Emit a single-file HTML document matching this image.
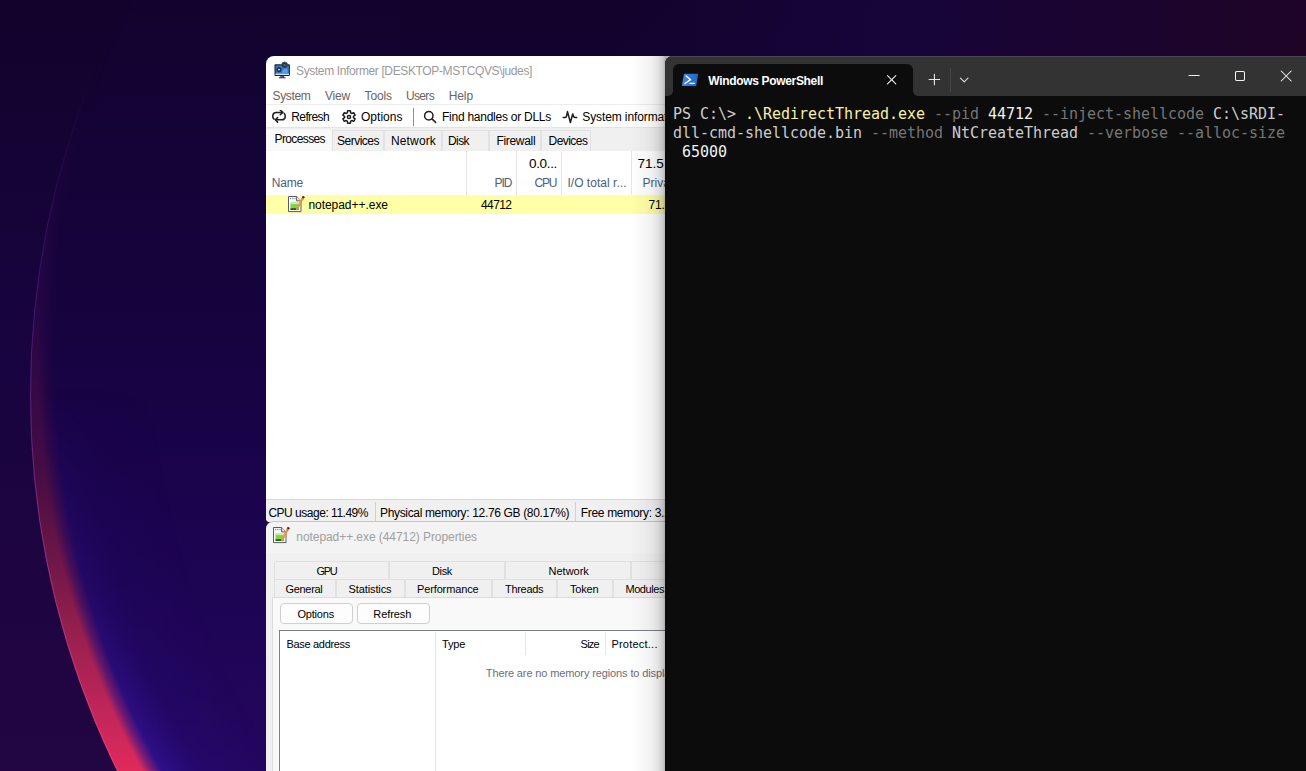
<!DOCTYPE html>
<html>
<head>
<meta charset="utf-8">
<title>Desktop</title>
<style>
*{box-sizing:border-box;margin:0;padding:0}
html,body{width:1306px;height:771px;overflow:hidden;background:#150536}
body{position:relative;font-family:"Liberation Sans",sans-serif;font-size:12px;color:#000}
#wall{position:absolute;left:0;top:0;width:1306px;height:771px}
.t{position:absolute;white-space:nowrap;line-height:1;display:block}
.a{position:absolute}
#si{position:absolute;left:266px;top:56px;width:420px;height:466px;background:#fff;border-radius:8px 8px 0 4px;overflow:hidden}
#si .msep{left:0;top:48px;width:100%;height:1px;background:#ededed}
#si .tbsep{left:147px;top:52px;width:1px;height:18px;background:#8e8e8e}
#si .tabs{left:0;top:71px;width:100%;height:24px;background:#f0f0f0;border-top:1px solid #e4e4e4}
#si .tab{top:74px;height:21px;border:1px solid #e2e2e2;border-bottom:none;background:#f0f0f0}
#si .tab.sel{top:73px;height:22px;background:#f9f9f9;border-color:#f4f4f4;left:0}
#si .colsep{top:95px;width:1px;height:44px;background:#e5e5e5}
#si .row{left:0;top:139px;width:100%;height:19px;background:#ffffa6}
#si .status{left:0;top:443px;width:100%;height:23px;background:#f0f0f0;border-top:1px solid #d7d7d7}
#si .ssep{top:446px;width:1px;height:19px;background:#d0d0d0}
#pr{position:absolute;left:266px;top:521px;width:420px;height:260px;background:#f0f0f0;border-radius:8px 0 0 0;overflow:hidden;border-top:1px solid #c6c6c6}
#pr .tb{left:0;top:0;width:100%;height:31px;background:#f3f3f3}
#pr .ptab{height:18px;border:1px solid #e0e0e0;border-bottom:none;background:#f0f0f0}
#pr .page{left:6px;top:75px;width:430px;height:200px;background:#f9f9f9;border:1px solid #dcdcdc}
#pr .btn{height:21px;top:81px;background:#fdfdfd;border:1px solid #d0d0d0;border-radius:4px}
#pr .lv{left:13px;top:108px;width:420px;height:200px;background:#fff;border:1px solid #7a7f88}
#pr .hsep{top:110px;width:1px;height:23px;background:#e5e5e5}
#shadow{position:absolute;left:630px;top:56px;width:45px;height:715px;background:linear-gradient(to right,rgba(0,0,0,0) 0%,rgba(0,0,0,.03) 33%,rgba(0,0,0,.06) 49%,rgba(0,0,0,.11) 62%,rgba(0,0,0,.20) 73%,rgba(0,0,0,.30) 78%,rgba(0,0,0,.35) 100%)}
#tm{position:absolute;left:665px;top:56px;width:660px;height:730px;background:#0c0c0c;border-radius:8px 0 0 0;overflow:hidden}
#tm .strip{left:0;top:0;width:100%;height:40px;background:#333333;border-top:1px solid #4a4a52}
#tm .tabb{left:8px;top:8px;width:240px;height:32px;background:#0c0c0c;border-radius:6px 6px 0 0}
#tm .tsep{left:285px;top:12px;width:1px;height:24px;background:#464646}
#tm pre{position:absolute;left:8px;top:49px;font-family:"DejaVu Sans Mono","Liberation Mono",monospace;font-size:15px;line-height:19px;letter-spacing:-0.031px;color:#cccccc}
#tm .fl{top:35px;width:5px;height:5px}
</style>
</head>
<body>
<svg id="wall" viewBox="0 0 1306 771">
<defs>
<linearGradient id="bg" x1="0" y1="0" x2="0" y2="771" gradientUnits="userSpaceOnUse"><stop offset="0" stop-color="#11032b"/><stop offset="0.45" stop-color="#180440"/><stop offset="1" stop-color="#220542"/></linearGradient>
<linearGradient id="topr" x1="600" y1="0" x2="1306" y2="0" gradientUnits="userSpaceOnUse"><stop offset="0" stop-color="#16043a" stop-opacity="0"/><stop offset="0.4" stop-color="#17043a" stop-opacity=".9"/><stop offset="1" stop-color="#1f0426"/></linearGradient>
<linearGradient id="inner" x1="0" y1="0" x2="0" y2="771" gradientUnits="userSpaceOnUse"><stop offset="0" stop-color="#12032e"/><stop offset="0.4" stop-color="#16033e"/><stop offset="0.7" stop-color="#1c0450"/><stop offset="1" stop-color="#23065e"/></linearGradient>
<radialGradient id="glow" cx="893" cy="362" r="855" gradientUnits="userSpaceOnUse">
<stop offset="0.86" stop-color="#2a0c88" stop-opacity="0"/><stop offset="0.94" stop-color="#2a0c88" stop-opacity=".3"/><stop offset="0.98" stop-color="#34149a" stop-opacity=".75"/><stop offset="1" stop-color="#4a1c90" stop-opacity=".9"/></radialGradient>
<linearGradient id="glowfade" x1="0" y1="0" x2="0" y2="771" gradientUnits="userSpaceOnUse"><stop offset="0.5" stop-color="#fff" stop-opacity="0"/><stop offset="0.78" stop-color="#fff" stop-opacity=".4"/><stop offset="1" stop-color="#fff" stop-opacity="1"/></linearGradient>
<mask id="gm"><rect width="1306" height="771" fill="url(#glowfade)"/></mask>
<linearGradient id="rim" x1="0" y1="0" x2="0" y2="771" gradientUnits="userSpaceOnUse">
<stop offset="0.1" stop-color="#3a0a60" stop-opacity="0"/><stop offset="0.4" stop-color="#400a50" stop-opacity=".35"/><stop offset="0.62" stop-color="#581044" stop-opacity=".75"/><stop offset="0.8" stop-color="#8e1e4c"/><stop offset="0.93" stop-color="#c4265a"/><stop offset="1" stop-color="#e02a5a"/></linearGradient>
<linearGradient id="edge" x1="0" y1="0" x2="0" y2="771" gradientUnits="userSpaceOnUse">
<stop offset="0.1" stop-color="#6a30c0" stop-opacity="0"/><stop offset="0.35" stop-color="#6a30b8" stop-opacity=".32"/><stop offset="0.7" stop-color="#9038a0" stop-opacity=".7"/><stop offset="1" stop-color="#f04070" stop-opacity=".9"/></linearGradient>
<radialGradient id="soft" cx="893" cy="362" r="855" gradientUnits="userSpaceOnUse"><stop offset="0.980" stop-color="#fff" stop-opacity="1"/><stop offset="0.991" stop-color="#fff" stop-opacity=".55"/><stop offset="1" stop-color="#fff" stop-opacity="0"/></radialGradient>
<mask id="sm"><rect width="400" height="771" fill="url(#soft)"/></mask>
<clipPath id="oc"><circle cx="885" cy="395" r="855"/></clipPath>
<filter id="b3" x="-5%" y="-5%" width="110%" height="110%"><feGaussianBlur stdDeviation="2.5"/></filter>
</defs>
<rect width="1306" height="771" fill="url(#bg)"/>
<circle cx="885" cy="395" r="855" fill="url(#rim)"/>
<g clip-path="url(#oc)"><g mask="url(#sm)"><rect width="400" height="771" fill="url(#inner)"/>
<g mask="url(#gm)"><rect width="400" height="771" fill="url(#glow)"/></g></g>
</g>
<circle cx="885" cy="395" r="854.5" fill="none" stroke="url(#edge)" stroke-width="1"/>
<rect x="600" y="0" width="706" height="60" fill="url(#topr)"/>
</svg>
<div id="si">
<div class="a msep"></div>
<div class="a tbsep"></div>
<div class="a tabs"></div>
<div class="a tab sel" style="width:66px"></div>
<div class="a tab" style="left:66px;width:52px"></div>
<div class="a tab" style="left:118px;width:58px"></div>
<div class="a tab" style="left:176px;width:47px"></div>
<div class="a tab" style="left:223px;width:52px"></div>
<div class="a tab" style="left:275px;width:50px;border-right:1px solid #e2e2e2"></div>
<div class="a colsep" style="left:200px"></div>
<div class="a colsep" style="left:250px"></div>
<div class="a colsep" style="left:295px"></div>
<div class="a colsep" style="left:365px"></div>
<div class="a row"></div>
<div class="a status"></div>
<div class="a ssep" style="left:109px"></div>
<div class="a ssep" style="left:309px"></div>
<svg class="a" style="left:8px;top:5px" width="17" height="18" viewBox="0 0 17 18">
<rect x="0.5" y="3.3" width="15.4" height="11.6" rx="0.8" fill="#1c1f26"/>
<rect x="1.6" y="4.4" width="13.2" height="7.6" fill="#2f7fd6"/>
<rect x="1.4" y="12.4" width="13.6" height="1.6" fill="#cfdfee"/>
<circle cx="5" cy="8.6" r="2.6" fill="#2a3038"/><circle cx="5" cy="8.6" r="0.9" fill="#e8eef4"/>
<circle cx="10.6" cy="4" r="3" fill="#2a3442" stroke="#4a5868" stroke-width="0.8"/><circle cx="10.6" cy="4" r="1" fill="#3d78b8"/>
<path d="M9.2,11.8 V9 M11,11.8 V7.6 M12.8,11.8 V8.4" stroke="#7db6f0" stroke-width="1"/>
<rect x="6.2" y="14.9" width="4" height="1.6" fill="#4a5560"/>
<rect x="4.8" y="16.3" width="6.8" height="1" fill="#2a2e34"/>
</svg>
<svg class="a" style="left:5.9px;top:54.2px" width="15" height="13" viewBox="0 0 15 13" fill="none" stroke="#1f1f1f" stroke-width="1.55" stroke-linecap="round" stroke-linejoin="round">
<path d="M2.1,9.1 C0,7.3 0.2,2.4 4.4,2.4 H10.4"/><path d="M8.3,0.1 L10.8,2.4 L8.3,4.8"/>
<path d="M12.3,3.4 C13.9,5.2 13.7,9.7 10,9.7 H4"/><path d="M5.6,7.6 L3.4,9.8 L5.6,12.1"/>
</svg>
<svg class="a" style="left:76px;top:54px" width="14" height="14" viewBox="0 0 14 14" fill="none" stroke="#1f1f1f" stroke-width="1.5" stroke-linejoin="round">
<path d="M5.34,2.82 L5.60,0.75 L8.40,0.75 L8.66,2.82 L9.80,3.47 L11.71,2.67 L13.11,5.09 L11.45,6.34 L11.45,7.66 L13.11,8.91 L11.71,11.33 L9.80,10.53 L8.66,11.18 L8.40,13.25 L5.60,13.25 L5.34,11.18 L4.20,10.53 L2.29,11.33 L0.89,8.91 L2.55,7.66 L2.55,6.34 L0.89,5.09 L2.29,2.67 L4.20,3.47Z"/><circle cx="7" cy="7" r="1.6"/>
</svg>
<svg class="a" style="left:157px;top:54px" width="14" height="14" viewBox="0 0 14 14" fill="none" stroke="#1f1f1f" stroke-width="1.5" stroke-linecap="round">
<circle cx="5.8" cy="5.7" r="4.2"/><path d="M9,8.9 L12.6,12.4"/>
</svg>
<svg class="a" style="left:296px;top:54px" width="16" height="14" viewBox="0 0 16 14" fill="none" stroke="#1f1f1f" stroke-width="1.5" stroke-linecap="round" stroke-linejoin="round">
<path d="M1.2,7.5 H3 Q4.3,7.5 4.6,6 L5.5,1.6 L8.4,12.5 L10.7,4 Q11.4,7.5 13,7.5 H14.8"/>
</svg>
<svg class="a" style="left:22px;top:139.6px" width="18" height="17" viewBox="0 0 18 17">
<path d="M0.5,0.5 H8.6 L13,4.9 V15.6 H0.5 Z" fill="#fdfdfd" stroke="#565a6c" stroke-width="1"/>
<path d="M8.6,0.5 V4.9 H13" fill="#e8e8ee" stroke="#565a6c" stroke-width="1"/>
<path d="M2,2.5 H8" stroke="#8a8e9e" stroke-width="1.4" stroke-dasharray="1.2 1"/>
<rect x="2.5" y="6.5" width="8" height="7.3" fill="#7ed63a"/>
<rect x="2.5" y="6.5" width="8" height="1.6" fill="#cfe8c0"/>
<rect x="2.5" y="12.3" width="8" height="1.6" fill="#1f4a12"/>
<path d="M15.3,1.2 L9,13" stroke="#e8963a" stroke-width="2.2" stroke-linecap="round"/>
<path d="M15.8,0.4 L14.9,2" stroke="#7a0a10" stroke-width="2.4"/>
<path d="M14.9,2 L14.2,3.3" stroke="#8a93a8" stroke-width="2.2"/>
</svg>
<span class="t" style="left:30.0px;top:9.00px;font-size:12px;color:#9a9a9a;letter-spacing:-0.372px;">System Informer [DESKTOP-MSTCQVS\judes]</span>
<span class="t" style="left:6.5px;top:34.00px;font-size:12px;color:#666666;letter-spacing:-0.336px;">System</span>
<span class="t" style="left:59.0px;top:34.00px;font-size:12px;color:#666666;letter-spacing:-0.199px;">View</span>
<span class="t" style="left:98.5px;top:34.00px;font-size:12px;color:#666666;letter-spacing:-0.103px;">Tools</span>
<span class="t" style="left:140.0px;top:34.00px;font-size:12px;color:#666666;letter-spacing:-0.669px;">Users</span>
<span class="t" style="left:182.7px;top:34.00px;font-size:12px;color:#666666;letter-spacing:-0.097px;">Help</span>
<span class="t" style="left:25.3px;top:55.00px;font-size:12px;color:#000;letter-spacing:-0.619px;">Refresh</span>
<span class="t" style="left:95.0px;top:55.00px;font-size:12px;color:#000;letter-spacing:0.020px;">Options</span>
<span class="t" style="left:176.0px;top:55.00px;font-size:12px;color:#000;letter-spacing:-0.254px;">Find handles or DLLs</span>
<span class="t" style="left:316.3px;top:55.00px;font-size:12px;color:#000;letter-spacing:-0.111px;">System information</span>
<span class="t" style="left:8.5px;top:77.00px;font-size:12px;color:#000;letter-spacing:-0.615px;">Processes</span>
<span class="t" style="left:71.0px;top:79.00px;font-size:12px;color:#000;letter-spacing:-0.502px;">Services</span>
<span class="t" style="left:125.0px;top:79.00px;font-size:12px;color:#000;letter-spacing:0.141px;">Network</span>
<span class="t" style="left:182.0px;top:79.00px;font-size:12px;color:#000;letter-spacing:-0.586px;">Disk</span>
<span class="t" style="left:230.4px;top:79.00px;font-size:12px;color:#000;letter-spacing:-0.305px;">Firewall</span>
<span class="t" style="left:282.5px;top:79.00px;font-size:12px;color:#000;letter-spacing:-0.541px;">Devices</span>
<span class="t" style="left:263.0px;top:101.00px;font-size:13.5px;color:#000;letter-spacing:-0.339px;">0.0...</span>
<span class="t" style="left:371.5px;top:101.00px;font-size:13.5px;color:#000;letter-spacing:0.005px;">71.5</span>
<span class="t" style="left:5.7px;top:121.00px;font-size:12px;color:#4c607a;letter-spacing:-0.179px;">Name</span>
<span class="t" style="left:228.5px;top:121.00px;font-size:12px;color:#4c607a;letter-spacing:-1.039px;">PID</span>
<span class="t" style="left:268.5px;top:121.00px;font-size:12px;color:#4c607a;letter-spacing:-1.148px;">CPU</span>
<span class="t" style="left:301.4px;top:121.00px;font-size:12px;color:#4c607a;letter-spacing:0.037px;">I/O total r...</span>
<span class="t" style="left:376.6px;top:121.00px;font-size:12px;color:#4c607a;letter-spacing:0.007px;">Private</span>
<span class="t" style="left:42.4px;top:143.00px;font-size:12px;color:#000;letter-spacing:-0.037px;">notepad++.exe</span>
<span class="t" style="left:215.1px;top:143.00px;font-size:12px;color:#000;letter-spacing:-0.655px;">44712</span>
<span class="t" style="left:382.5px;top:143.00px;font-size:12px;color:#000;letter-spacing:-0.229px;">71.5</span>
<span class="t" style="left:2.4px;top:451.00px;font-size:12px;color:#000;letter-spacing:-0.485px;">CPU usage: 11.49%</span>
<span class="t" style="left:114.0px;top:451.00px;font-size:12px;color:#000;letter-spacing:-0.340px;">Physical memory: 12.76 GB (80.17%)</span>
<span class="t" style="left:314.7px;top:451.00px;font-size:12px;color:#000;letter-spacing:-0.309px;">Free memory: 3.15 GB</span>
</div>
<div id="pr">
<div class="a tb"></div>
<div class="a page"></div>
<div class="a ptab" style="left:8px;top:39px;width:115px"></div>
<div class="a ptab" style="left:123px;top:39px;width:116px"></div>
<div class="a ptab" style="left:239px;top:39px;width:126px"></div>
<div class="a ptab" style="left:365px;top:39px;width:100px"></div>
<div class="a ptab" style="left:8px;top:57px;width:62px"></div>
<div class="a ptab" style="left:70px;top:57px;width:69px"></div>
<div class="a ptab" style="left:139px;top:57px;width:87px"></div>
<div class="a ptab" style="left:226px;top:57px;width:65px"></div>
<div class="a ptab" style="left:291px;top:57px;width:56px"></div>
<div class="a ptab" style="left:347px;top:57px;width:70px"></div>
<div class="a btn" style="left:14px;width:73px"></div>
<div class="a btn" style="left:91px;width:73px"></div>
<div class="a lv"></div>
<div class="a hsep" style="left:169px;height:200px"></div>
<div class="a hsep" style="left:259px"></div>
<div class="a hsep" style="left:339px"></div>
<svg class="a" style="left:7px;top:4.6px" width="18" height="17" viewBox="0 0 18 17">
<path d="M0.5,0.5 H8.6 L13,4.9 V15.6 H0.5 Z" fill="#fdfdfd" stroke="#565a6c" stroke-width="1"/>
<path d="M8.6,0.5 V4.9 H13" fill="#e8e8ee" stroke="#565a6c" stroke-width="1"/>
<path d="M2,2.5 H8" stroke="#8a8e9e" stroke-width="1.4" stroke-dasharray="1.2 1"/>
<rect x="2.5" y="6.5" width="8" height="7.3" fill="#7ed63a"/>
<rect x="2.5" y="6.5" width="8" height="1.6" fill="#cfe8c0"/>
<rect x="2.5" y="12.3" width="8" height="1.6" fill="#1f4a12"/>
<path d="M15.3,1.2 L9,13" stroke="#e8963a" stroke-width="2.2" stroke-linecap="round"/>
<path d="M15.8,0.4 L14.9,2" stroke="#7a0a10" stroke-width="2.4"/>
<path d="M14.9,2 L14.2,3.3" stroke="#8a93a8" stroke-width="2.2"/>
</svg>
<span class="t" style="left:30.3px;top:9.00px;font-size:12px;color:#a0a0a0;letter-spacing:-0.066px;">notepad++.exe (44712) Properties</span>
<span class="t" style="left:50.5px;top:44.00px;font-size:11px;color:#000;letter-spacing:-1.281px;">GPU</span>
<span class="t" style="left:166.0px;top:44.00px;font-size:11px;color:#000;letter-spacing:-0.348px;">Disk</span>
<span class="t" style="left:282.6px;top:44.00px;font-size:11px;color:#000;letter-spacing:-0.021px;">Network</span>
<span class="t" style="left:19.5px;top:62.00px;font-size:11px;color:#000;letter-spacing:-0.306px;">General</span>
<span class="t" style="left:82.5px;top:62.00px;font-size:11px;color:#000;letter-spacing:-0.102px;">Statistics</span>
<span class="t" style="left:151.0px;top:62.00px;font-size:11px;color:#000;letter-spacing:-0.135px;">Performance</span>
<span class="t" style="left:239.1px;top:62.00px;font-size:11px;color:#000;letter-spacing:-0.323px;">Threads</span>
<span class="t" style="left:304.0px;top:62.00px;font-size:11px;color:#000;letter-spacing:-0.192px;">Token</span>
<span class="t" style="left:359.4px;top:62.00px;font-size:11px;color:#000;letter-spacing:-0.425px;">Modules</span>
<span class="t" style="left:31.5px;top:87.00px;font-size:11px;color:#000;letter-spacing:-0.203px;">Options</span>
<span class="t" style="left:107.3px;top:87.00px;font-size:11px;color:#000;letter-spacing:-0.090px;">Refresh</span>
<span class="t" style="left:20.5px;top:117.00px;font-size:11px;color:#000;letter-spacing:-0.314px;">Base address</span>
<span class="t" style="left:176.0px;top:117.00px;font-size:11px;color:#000;letter-spacing:-0.140px;">Type</span>
<span class="t" style="left:314.6px;top:117.00px;font-size:11px;color:#000;letter-spacing:-0.752px;">Size</span>
<span class="t" style="left:345.4px;top:117.00px;font-size:11px;color:#000;letter-spacing:0.227px;">Protect...</span>
<span class="t" style="left:219.8px;top:146.00px;font-size:11px;color:#6d6d78;letter-spacing:-0.120px;">There are no memory regions to display.</span>
</div>
<div id="shadow"></div>
<div id="tm">
<div class="a strip"></div>
<div class="a tabb"></div>
<div class="a tsep"></div>
<div class="a fl" style="left:3px;background:radial-gradient(circle at 0 0,#333 4.4px,#0c0c0c 5.2px)"></div>
<div class="a fl" style="left:248px;background:radial-gradient(circle at 100% 0,#333 4.4px,#0c0c0c 5.2px)"></div>
<svg class="a" style="left:16px;top:17px" width="18" height="14" viewBox="0 0 18 14">
<defs><linearGradient id="psg" x1="0" y1="0" x2="1" y2="0"><stop offset="0" stop-color="#3d86e4"/><stop offset="1" stop-color="#2466c6"/></linearGradient></defs>
<path d="M3,0.8 H17.2 L15.2,13 H0.8 Z" fill="url(#psg)"/>
<path d="M5.2,3 L9.5,6.7 L4,10.5" fill="none" stroke="#fff" stroke-width="1.5" stroke-linecap="round" stroke-linejoin="round"/>
<path d="M9,10.4 H13.4" stroke="#fff" stroke-width="1.4" stroke-linecap="round"/>
</svg>
<svg class="a" style="left:221px;top:18px" width="12" height="12" viewBox="0 0 12 12" stroke="#f0f0f0" stroke-width="1.1" stroke-linecap="round"><path d="M1.5,1.6 L9.8,9.9 M9.8,1.6 L1.5,9.9"/></svg>
<svg class="a" style="left:263px;top:17px" width="13" height="13" viewBox="0 0 13 13" stroke="#e8e8e8" stroke-width="1.1" stroke-linecap="round"><path d="M6.4,1.2 V11.8 M1.1,6.5 H11.7"/></svg>
<svg class="a" style="left:294px;top:20px" width="11" height="8" viewBox="0 0 11 8" fill="none" stroke="#e0e0e0" stroke-width="1.1" stroke-linecap="round" stroke-linejoin="round"><path d="M1.4,2.2 L5.2,5.8 L9,2.2"/></svg>
<svg class="a" style="left:522px;top:13px" width="110" height="14" viewBox="0 0 110 14" fill="none" stroke="#f4f4f4" stroke-width="1.05" stroke-linecap="round"><path d="M2,6.5 H12.2"/><rect x="48.5" y="2.5" width="9" height="9" rx="1.2"/><path d="M94.2,2 L104.2,12 M104.2,2 L94.2,12"/></svg>
<span class="t" style="left:43.3px;top:19.00px;font-size:12px;color:#ffffff;letter-spacing:-0.327px;font-weight:bold;">Windows PowerShell</span>
<pre>PS C:\&gt; <span style="color:#f9f1a5">.\RedirectThread.exe</span> <span style="color:#767676">--pid</span> <span style="color:#f2f2f2">44712</span> <span style="color:#767676">--inject-shellcode</span> C:\sRDI-
dll-cmd-shellcode.bin <span style="color:#767676">--method</span> NtCreateThread <span style="color:#767676">--verbose</span> <span style="color:#767676">--alloc-size</span>
 <span style="color:#f2f2f2">65000</span></pre>
</div>

</body>
</html>
